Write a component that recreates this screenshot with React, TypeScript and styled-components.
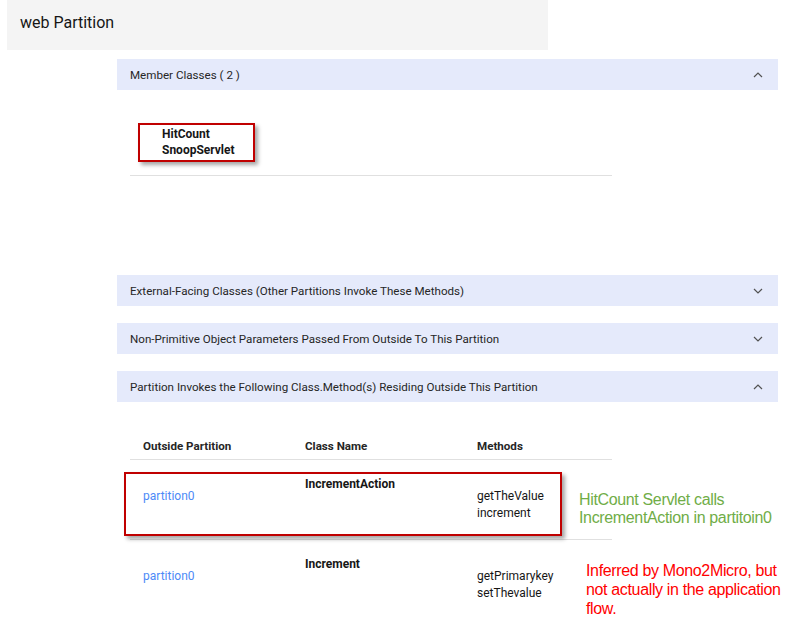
import React from "react";
import styled, { createGlobalStyle } from "styled-components";

const Global = createGlobalStyle`
  html, body { margin: 0; padding: 0; background: #ffffff; }
  body { font-family: Roboto, "Noto Sans", Arial, sans-serif; color: #161616; }
`;

const Page = styled.div`
  width: 795px;
  min-height: 621px;
  overflow: hidden;
`;

const TitleBar = styled.div`
  margin-left: 7px;
  width: 541px;
  height: 50px;
  background: #f4f4f4;
  display: flex;
  align-items: center;
  padding-left: 13px;
  box-sizing: border-box;
  font-size: 16px;
  color: #161616;
  padding-bottom: 5px;
`;

const Main = styled.div`
  margin-left: 117px;
  width: 661px;
  display: flex;
  flex-direction: column;
`;

const AccHeader = styled.div<{ $mt: number }>`
  margin-top: ${(p) => p.$mt}px;
  height: 31px;
  background: #e5eafb;
  display: flex;
  align-items: center;
  justify-content: space-between;
  padding: 0 13px;
  font-size: 11.6px;
  color: #262626;
`;

const Chevron = ({ up }: { up: boolean }) => (
  <svg width="10" height="6" viewBox="0 0 10 6" style={{ marginRight: 2 }}>
    <path
      d={up ? "M1 5 L5 1 L9 5" : "M1 1 L5 5 L9 1"}
      fill="none"
      stroke="#525252"
      strokeWidth="1.2"
    />
  </svg>
);

const MemberBody = styled.div`
  margin-left: 13px;
  width: 482px;
  padding-top: 36px;
  padding-left: 32px;
  height: 86px;
  box-sizing: border-box;
  border-bottom: 1px solid #e0e0e0;
  position: relative;
`;

const BoldLine = styled.div`
  font-size: 12px;
  font-weight: 700;
  line-height: 16px;
  color: #161616;
`;

const Highlight = styled.div<{ $l: number; $t: number; $w: number; $h: number }>`
  position: absolute;
  left: ${(p) => p.$l}px;
  top: ${(p) => p.$t}px;
  width: ${(p) => p.$w}px;
  height: ${(p) => p.$h}px;
  border: 2px solid #c00000;
  box-sizing: border-box;
  box-shadow: 3px 3px 4px rgba(0, 0, 0, 0.35);
  pointer-events: none;
`;

const Table = styled.div`
  margin-left: 13px;
  width: 482px;
  margin-top: 35px;
  position: relative;
`;

const Row = styled.div<{ $h: number }>`
  display: grid;
  grid-template-columns: 162px 172px 148px;
  height: ${(p) => p.$h}px;
  border-bottom: 1px solid #e0e0e0;
  position: relative;
  font-size: 12px;
`;

const HeadCell = styled.div`
  padding-left: 13px;
  padding-top: 2px;
  font-weight: 700;
  font-size: 11.6px;
  color: #262626;
`;

const Cell = styled.div<{ $pt: number }>`
  padding-left: 13px;
  padding-top: ${(p) => p.$pt}px;
  line-height: 17px;
`;

const LinkText = styled.span`
  color: #4d8af7;
`;

const ClassName = styled.span`
  font-weight: 700;
  color: #161616;
`;

const Note = styled.div<{ $l: number; $t: number; $c: string; $lh: number }>`
  position: absolute;
  left: ${(p) => p.$l}px;
  top: ${(p) => p.$t}px;
  white-space: nowrap;
  font-family: "Liberation Sans", Arial, sans-serif;
  font-size: 16px;
  letter-spacing: -0.35px;
  line-height: ${(p) => p.$lh}px;
  color: ${(p) => p.$c};
`;

export default function App() {
  return (
    <Page>
      <Global />
      <TitleBar>web Partition</TitleBar>
      <Main>
        <AccHeader $mt={9}>
          <span>Member Classes ( 2 )</span>
          <Chevron up />
        </AccHeader>
        <MemberBody>
          <BoldLine>HitCount</BoldLine>
          <BoldLine>SnoopServlet</BoldLine>
          <Highlight $l={8} $t={33} $w={117} $h={39} />
        </MemberBody>
        <AccHeader $mt={99}>
          <span>External-Facing Classes (Other Partitions Invoke These Methods)</span>
          <Chevron up={false} />
        </AccHeader>
        <AccHeader $mt={17}>
          <span>Non-Primitive Object Parameters Passed From Outside To This Partition</span>
          <Chevron up={false} />
        </AccHeader>
        <AccHeader $mt={17}>
          <span>Partition Invokes the Following Class.Method(s) Residing Outside This Partition</span>
          <Chevron up />
        </AccHeader>
        <Table>
          <Row $h={22}>
            <HeadCell>Outside Partition</HeadCell>
            <HeadCell>Class Name</HeadCell>
            <HeadCell>Methods</HeadCell>
          </Row>
          <Row $h={79}>
            <Cell $pt={28}><LinkText>partition0</LinkText></Cell>
            <Cell $pt={16}><ClassName>IncrementAction</ClassName></Cell>
            <Cell $pt={28}>getTheValue<br />increment</Cell>
            <Highlight $l={-6} $t={12} $w={438} $h={64} />
            <Note $l={449} $t={31} $lh={18} $c="#70ad47">HitCount Servlet calls<br />IncrementAction in partitoin0</Note>
          </Row>
          <Row $h={81}>
            <Cell $pt={28}><LinkText>partition0</LinkText></Cell>
            <Cell $pt={16}><ClassName>Increment</ClassName></Cell>
            <Cell $pt={28}>getPrimarykey<br />setThevalue</Cell>
            <Note $l={456} $t={21} $lh={19} $c="#ff0000">Inferred by Mono2Micro, but<br />not actually in the application<br />flow.</Note>
          </Row>
        </Table>
      </Main>
    </Page>
  );
}
